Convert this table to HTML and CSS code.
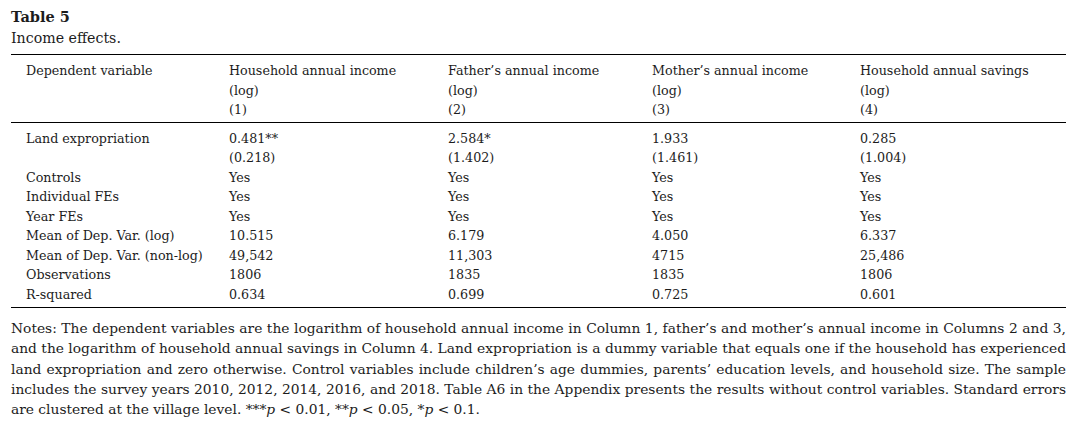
FILE: index.html
```html
<!DOCTYPE html>
<html lang="en">
<head>
<meta charset="utf-8">
<title>Table 5</title>
<link rel="stylesheet" href="styles.css">
</head>
<body>
<div class="page">
  <div class="caption">
    <div class="cap-title">Table 5</div>
    <div class="cap-sub">Income effects.</div>
  </div>
  <table class="tbl">
    <colgroup>
      <col class="c0"><col class="c1"><col class="c2"><col class="c3"><col class="c4">
    </colgroup>
    <thead>
      <tr>
        <th class="lab">Dependent variable</th>
        <th>Household annual income<br>(log)<br>(1)</th>
        <th>Father’s annual income<br>(log)<br>(2)</th>
        <th>Mother’s annual income<br>(log)<br>(3)</th>
        <th>Household annual savings<br>(log)<br>(4)</th>
      </tr>
    </thead>
    <tbody>
      <tr class="first"><td class="lab">Land expropriation</td><td>0.481**</td><td>2.584*</td><td>1.933</td><td>0.285</td></tr>
      <tr><td class="lab"></td><td>(0.218)</td><td>(1.402)</td><td>(1.461)</td><td>(1.004)</td></tr>
      <tr><td class="lab">Controls</td><td>Yes</td><td>Yes</td><td>Yes</td><td>Yes</td></tr>
      <tr><td class="lab">Individual FEs</td><td>Yes</td><td>Yes</td><td>Yes</td><td>Yes</td></tr>
      <tr><td class="lab">Year FEs</td><td>Yes</td><td>Yes</td><td>Yes</td><td>Yes</td></tr>
      <tr><td class="lab">Mean of Dep. Var. (log)</td><td>10.515</td><td>6.179</td><td>4.050</td><td>6.337</td></tr>
      <tr><td class="lab">Mean of Dep. Var. (non-log)</td><td>49,542</td><td>11,303</td><td>4715</td><td>25,486</td></tr>
      <tr><td class="lab">Observations</td><td>1806</td><td>1835</td><td>1835</td><td>1806</td></tr>
      <tr class="last"><td class="lab">R-squared</td><td>0.634</td><td>0.699</td><td>0.725</td><td>0.601</td></tr>
    </tbody>
  </table>
  <p class="notes">
    <span class="ln">Notes: The dependent variables are the logarithm of household annual income in Column 1, father’s and mother’s annual income in Columns 2 and 3,</span>
    <span class="ln">and the logarithm of household annual savings in Column 4. Land expropriation is a dummy variable that equals one if the household has experienced</span>
    <span class="ln">land expropriation and zero otherwise. Control variables include children’s age dummies, parents’ education levels, and household size. The sample</span>
    <span class="ln">includes the survey years 2010, 2012, 2014, 2016, and 2018. Table A6 in the Appendix presents the results without control variables. Standard errors</span>
    <span class="ln end">are clustered at the village level. ***<i class="pv">p</i> &lt; 0.01, **<i class="pv">p</i> &lt; 0.05, *<i class="pv">p</i> &lt; 0.1.</span>
  </p>
</div>
</body>
</html>
```

FILE: styles.css
```css
html, body {
  margin: 0;
  padding: 0;
  background: #ffffff;
}
body {
  font-family: "DejaVu Serif", serif;
  color: #1c1c1c;
}
.page {
  width: 1055px;
  padding: 7px 0 0 11px;
}
.caption {
  line-height: 20px;
}
.cap-title {
  font-weight: bold;
  font-size: 14.5px;
}
.cap-sub {
  font-size: 14.2px;
  margin-top: 1px;
}
.tbl {
  width: 1055px;
  border-collapse: collapse;
  table-layout: fixed;
  margin-top: 6px;
  border-top: 1px solid #000;
  border-bottom: 1px solid #000;
  font-size: 12.7px;
}
.c0 { width: 218px; }
.c1 { width: 219px; }
.c2 { width: 204px; }
.c3 { width: 208px; }
.c4 { width: 206px; }
.tbl th, .tbl td {
  text-align: left;
  font-weight: normal;
  vertical-align: top;
  padding: 0;
  line-height: 19.5px;
  white-space: nowrap;
}
.tbl th {
  padding-top: 6px;
  padding-bottom: 2px;
  border-bottom: 1px solid #000;
}
.tbl .lab {
  padding-left: 15px;
}
.tbl tr.first td {
  padding-top: 6px;
}
.tbl tr.last td {
  padding-bottom: 3px;
}
.notes {
  margin: 10px 0 0;
  font-size: 13.8px;
  line-height: 20.3px;
}
.notes .ln {
  display: block;
  white-space: nowrap;
  text-align: justify;
  text-align-last: justify;
}
.notes .ln.end {
  text-align-last: left;
}
.pv {
  font-style: italic;
}
```
